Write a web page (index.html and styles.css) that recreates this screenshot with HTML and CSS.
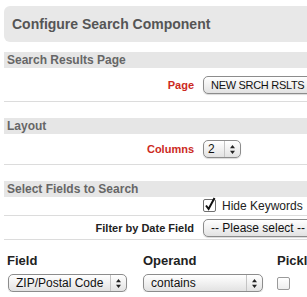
FILE: index.html
```html
<!DOCTYPE html>
<html lang="en">
<head>
    <meta charset="UTF-8">
    <title>Configure Search Component</title>
    <link rel="stylesheet" href="styles.css">
</head>
<body>
    <div class="panel">
        <div class="title">Configure Search Component</div>

        <div class="section-head">Search Results Page</div>
        <div class="row row-page">
            <div class="label required">Page</div>
            <div class="select wide">
                <span class="value caps">NEW SRCH RSLTS</span>
            </div>
        </div>

        <div class="section-head">Layout</div>
        <div class="row row-layout">
            <div class="label required">Columns</div>
            <div class="select small">
                <span class="value">2</span>
                <span class="arrows">
                    <svg width="5" height="9" viewBox="0 0 5 9"><path d="M2.5 0 L5 3.2 L0 3.2 Z M2.5 9 L5 5.8 L0 5.8 Z" fill="#222"/></svg>
                </span>
            </div>
        </div>

        <div class="section-head">Select Fields to Search</div>
        <div class="row row-check">
            <div class="label"></div>
            <label class="check">
                <svg class="box" width="14" height="15" viewBox="0 0 14 15">
                    <rect x="0.5" y="2.5" width="12" height="12" rx="1.5" fill="#fff" stroke="#6f6f6f"/>
                    <path d="M3 8.5 L5.6 12 L11.5 1" fill="none" stroke="#111" stroke-width="2"/>
                </svg>
                Hide Keywords
            </label>
        </div>
        <div class="row row-filter">
            <div class="label">Filter by Date Field</div>
            <div class="select wide">
                <span class="value">-- Please select --</span>
            </div>
        </div>

        <div class="fields">
            <div class="col-head">Field</div>
            <div class="col-head">Operand</div>
            <div class="col-head">Picklist</div>

            <div class="select field">
                <span class="value">ZIP/Postal Code</span>
                <span class="arrows">
                    <svg width="5" height="9" viewBox="0 0 5 9"><path d="M2.5 0 L5 3.2 L0 3.2 Z M2.5 9 L5 5.8 L0 5.8 Z" fill="#222"/></svg>
                </span>
            </div>
            <div class="select operand">
                <span class="value">contains</span>
                <span class="arrows">
                    <svg width="5" height="9" viewBox="0 0 5 9"><path d="M2.5 0 L5 3.2 L0 3.2 Z M2.5 9 L5 5.8 L0 5.8 Z" fill="#222"/></svg>
                </span>
            </div>
            <div class="empty-box"></div>
        </div>
    </div>
</body>
</html>
```

FILE: styles.css
```css
body {
    margin: 0;
    overflow: hidden;
    font-family: "Liberation Sans", Arial, sans-serif;
    color: #222;
    background: #fff;
}
.panel {
    padding: 6px 0 0 4px;
    width: 360px;
}
.title {
    height: 36px;
    line-height: 36px;
    padding-left: 8px;
    background: #e8e8e8;
    border-radius: 6px 0 0 6px;
    font-size: 14px;
    font-weight: bold;
    color: #555;
}
.section-head {
    margin-top: 10px;
    height: 16px;
    line-height: 16px;
    padding-left: 3px;
    background: #e6e6e6;
    font-size: 12px;
    font-weight: bold;
    color: #666;
}
.row {
    display: grid;
    grid-template-columns: 190px 1fr;
    column-gap: 9px;
    align-items: center;
    border-bottom: 1px solid #dcdcdc;
}
.row + .section-head {
    margin-top: 16px;
}
.row-page {
    height: 33px;
}
.row-layout {
    height: 30px;
}
.row-check {
    height: 18px;
}
.row-filter {
    height: 23px;
}
.label {
    text-align: right;
    font-size: 11px;
    font-weight: bold;
    color: #222;
}
.required {
    color: #cc2a22;
}
.select {
    display: flex;
    align-items: center;
    height: 16px;
    border: 1px solid #8c8c8c;
    border-radius: 5px;
    background: linear-gradient(#ffffff, #f1f1f1 50%, #e2e2e2);
    box-shadow: 0 1px 1px rgba(0, 0, 0, 0.15);
    font-size: 12px;
    color: #111;
}
.select .value {
    flex: 1;
    padding-left: 7px;
    white-space: nowrap;
}
.select .caps {
    font-size: 11px;
    letter-spacing: -0.3px;
}
.select .arrows {
    display: flex;
    align-items: center;
    justify-content: center;
    width: 15px;
    height: 100%;
    border-left: 1px solid #c4c4c4;
}
.wide {
    width: 140px;
}
.small {
    width: 36px;
}
.small .value {
    padding-left: 4px;
}
.check {
    display: flex;
    align-items: center;
    gap: 5px;
    font-size: 12px;
    color: #222;
}
.check .box {
    margin-top: -3px;
}
.fields {
    display: grid;
    grid-template-columns: 136px 134px 1fr;
    row-gap: 6px;
    padding: 13px 0 0 3px;
    align-items: center;
}
.col-head {
    font-size: 13px;
    font-weight: bold;
    color: #222;
}
.field {
    width: 117px;
    margin-left: 1px;
}
.operand {
    width: 118px;
}
.empty-box {
    width: 11px;
    height: 11px;
    border: 1px solid #9a9a9a;
    border-radius: 2px;
    background: linear-gradient(#fff, #eee);
}
```
